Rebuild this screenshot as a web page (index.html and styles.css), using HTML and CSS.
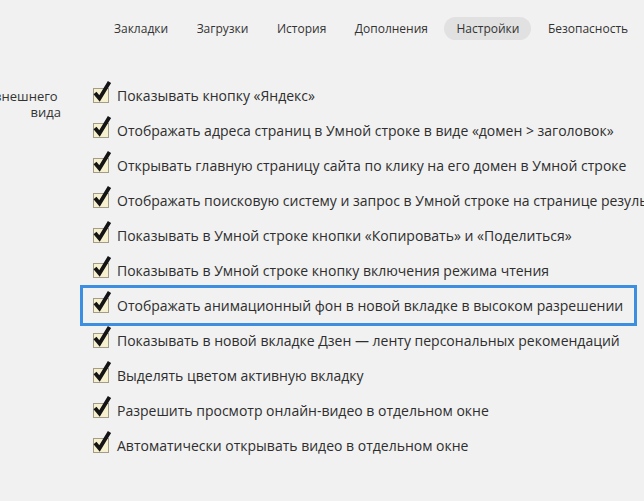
FILE: index.html
```html
<!DOCTYPE html>
<html lang="ru">
<head>
<meta charset="utf-8">
<link rel="stylesheet" href="styles.css">
</head>
<body>
<nav class="tabs">
  <span class="tab">Закладки</span>
  <span class="tab">Загрузки</span>
  <span class="tab">История</span>
  <span class="tab">Дополнения</span>
  <span class="tab active">Настройки</span>
  <span class="tab">Безопасность</span>
</nav>
<main class="section">
  <div class="label">Настройки внешнего&nbsp;<br>вида</div>
  <div class="options">
    <label class="opt"><span class="box"><svg class="tick" viewBox="0 0 20 24" width="20" height="24"><path d="M2 13 L6.5 18.5 L16.5 2"/></svg></span>Показывать кнопку «Яндекс»</label>
    <label class="opt"><span class="box"><svg class="tick" viewBox="0 0 20 24" width="20" height="24"><path d="M2 13 L6.5 18.5 L16.5 2"/></svg></span>Отображать адреса страниц в Умной строке в виде «домен &gt; заголовок»</label>
    <label class="opt"><span class="box"><svg class="tick" viewBox="0 0 20 24" width="20" height="24"><path d="M2 13 L6.5 18.5 L16.5 2"/></svg></span>Открывать главную страницу сайта по клику на его домен в Умной строке</label>
    <label class="opt"><span class="box"><svg class="tick" viewBox="0 0 20 24" width="20" height="24"><path d="M2 13 L6.5 18.5 L16.5 2"/></svg></span>Отображать поисковую систему и запрос в Умной строке на странице результатов</label>
    <label class="opt"><span class="box"><svg class="tick" viewBox="0 0 20 24" width="20" height="24"><path d="M2 13 L6.5 18.5 L16.5 2"/></svg></span>Показывать в Умной строке кнопки «Копировать» и «Поделиться»</label>
    <label class="opt"><span class="box"><svg class="tick" viewBox="0 0 20 24" width="20" height="24"><path d="M2 13 L6.5 18.5 L16.5 2"/></svg></span>Показывать в Умной строке кнопку включения режима чтения</label>
    <label class="opt highlight"><span class="box"><svg class="tick" viewBox="0 0 20 24" width="20" height="24"><path d="M2 13 L6.5 18.5 L16.5 2"/></svg></span>Отображать анимационный фон в новой вкладке в высоком разрешении</label>
    <label class="opt"><span class="box"><svg class="tick" viewBox="0 0 20 24" width="20" height="24"><path d="M2 13 L6.5 18.5 L16.5 2"/></svg></span>Показывать в новой вкладке Дзен — ленту персональных рекомендаций</label>
    <label class="opt"><span class="box"><svg class="tick" viewBox="0 0 20 24" width="20" height="24"><path d="M2 13 L6.5 18.5 L16.5 2"/></svg></span>Выделять цветом активную вкладку</label>
    <label class="opt"><span class="box"><svg class="tick" viewBox="0 0 20 24" width="20" height="24"><path d="M2 13 L6.5 18.5 L16.5 2"/></svg></span>Разрешить просмотр онлайн-видео в отдельном окне</label>
    <label class="opt"><span class="box"><svg class="tick" viewBox="0 0 20 24" width="20" height="24"><path d="M2 13 L6.5 18.5 L16.5 2"/></svg></span>Автоматически открывать видео в отдельном окне</label>
  </div>
</main>
</body>
</html>
```
FILE: styles.css
```css
html, body {
  margin: 0;
  padding: 0;
  background: #f1f1f1;
  overflow: hidden;
  width: 644px;
  height: 501px;
}
body {
  font-family: "Open Sans", "Noto Sans", sans-serif;
  color: #2e2e2e;
  font-size: 14px;
}
.tabs {
  display: flex;
  gap: 4.5px;
  padding: 17px 0 0 102px;
  white-space: nowrap;
}
.tab {
  display: block;
  height: 23px;
  line-height: 23px;
  padding: 0 12px;
  border-radius: 12px;
  font-size: 12px;
  color: #333;
}
.tab.active {
  background: #e1e1e1;
}
.section {
  display: flex;
  margin-top: 38px;
}
.label {
  flex: 0 0 200px;
  margin-left: -139px;
  text-align: right;
  font-size: 13px;
  line-height: 16px;
  padding-top: 10px;
  color: #333;
}
.options {
  display: flex;
  flex-direction: column;
  margin-left: 19px;
  white-space: nowrap;
}
.opt {
  display: flex;
  align-items: center;
  height: 35px;
  padding-left: 10px;
  font-size: 14px;
  border: 3px solid transparent;
  margin: -3px 0 -3px 0;
  width: 541px;
}
.opt.highlight {
  border-color: #3b8ee0;
}
.box {
  position: relative;
  flex: 0 0 auto;
  width: 14px;
  height: 13px;
  border: 1px solid #a29c88;
  background: #f7f0cf;
  margin-right: 8px;
}
.tick {
  position: absolute;
  left: -1px;
  top: -9px;
  fill: none;
  stroke: #141414;
  stroke-width: 3.8;
  stroke-linejoin: miter;
  stroke-linecap: butt;
}
```
